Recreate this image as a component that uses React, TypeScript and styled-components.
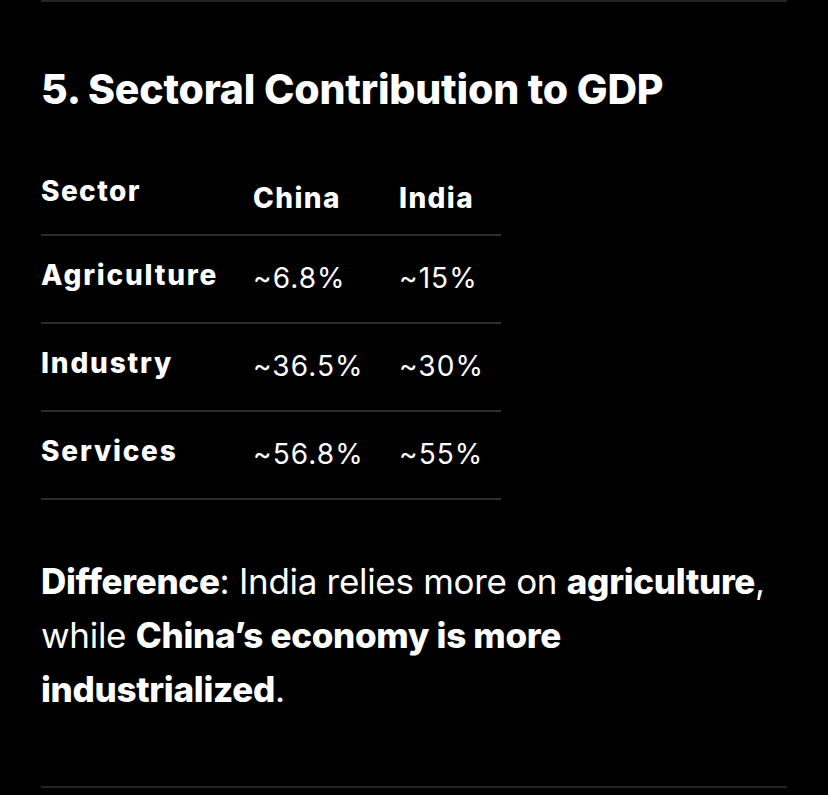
import React from 'react'
import styled, { createGlobalStyle } from 'styled-components'

const GlobalStyle = createGlobalStyle`
  html, body {
    margin: 0;
    padding: 0;
    background: #000;
  }
  body {
    font-family: Inter, "Noto Sans", "Liberation Sans", sans-serif;
    color: #fff;
    -webkit-font-smoothing: antialiased;
  }
`

const Page = styled.div`
  width: 828px;
  height: 795px;
  box-sizing: border-box;
  padding: 0 41px;
  overflow: hidden;
  background: #000;
`

const Rule = styled.hr`
  margin: 0;
  border: 0;
  height: 2px;
  background: #242424;
`

const Title = styled.h2`
  margin: 63px 0 0;
  font-size: 41px;
  line-height: 48px;
  font-weight: 800;
  letter-spacing: -0.2px;
`

const Table = styled.table`
  margin-top: 62px;
  width: 460px;
  border-collapse: collapse;
  table-layout: fixed;
`

const Col = styled.col<{ w: number }>`
  width: ${({ w }) => w}px;
`

const Row = styled.tr`
  border-bottom: 2px solid #2c2c2c;
`

const HeadCell = styled.th<{ offset?: number }>`
  text-align: left;
  vertical-align: top;
  padding: ${({ offset = 0 }) => `${offset}px 0 ${26 - offset}px`};
  font-size: 28px;
  line-height: 33px;
  font-weight: 800;
  letter-spacing: 1.4px;
`

const LabelCell = styled.td`
  vertical-align: top;
  padding: 23px 0 30px;
  font-size: 28px;
  line-height: 33px;
  font-weight: 800;
  letter-spacing: 1.8px;
`

const ValueCell = styled.td`
  vertical-align: top;
  padding: 26px 0 27px;
  font-size: 28px;
  line-height: 33px;
  font-weight: 400;
  letter-spacing: 1.1px;
`

const Note = styled.p`
  margin: 54px 0 0;
  font-size: 35px;
  line-height: 54px;
  font-weight: 400;
  letter-spacing: -0.3px;

  strong {
    font-weight: 800;
  }
`

const BottomRule = styled(Rule)`
  margin-top: 70px;
`

const rows = [
  { sector: 'Agriculture', china: '~6.8%', india: '~15%' },
  { sector: 'Industry', china: '~36.5%', india: '~30%' },
  { sector: 'Services', china: '~56.8%', india: '~55%' }
]

export default function App() {
  return (
    <Page>
      <GlobalStyle />
      <Rule />
      <Title>5. Sectoral Contribution to GDP</Title>
      <Table>
        <colgroup>
          <Col w={212} />
          <Col w={146} />
          <Col w={102} />
        </colgroup>
        <thead>
          <Row>
            <HeadCell>Sector</HeadCell>
            <HeadCell offset={7}>China</HeadCell>
            <HeadCell offset={7}>India</HeadCell>
          </Row>
        </thead>
        <tbody>
          {rows.map(r => (
            <Row key={r.sector}>
              <LabelCell>{r.sector}</LabelCell>
              <ValueCell>{r.china}</ValueCell>
              <ValueCell>{r.india}</ValueCell>
            </Row>
          ))}
        </tbody>
      </Table>
      <Note>
        <strong>Difference</strong>: India relies more on <strong>agriculture</strong>, while{' '}
        <strong>China’s economy is more industrialized</strong>.
      </Note>
      <BottomRule />
    </Page>
  )
}
